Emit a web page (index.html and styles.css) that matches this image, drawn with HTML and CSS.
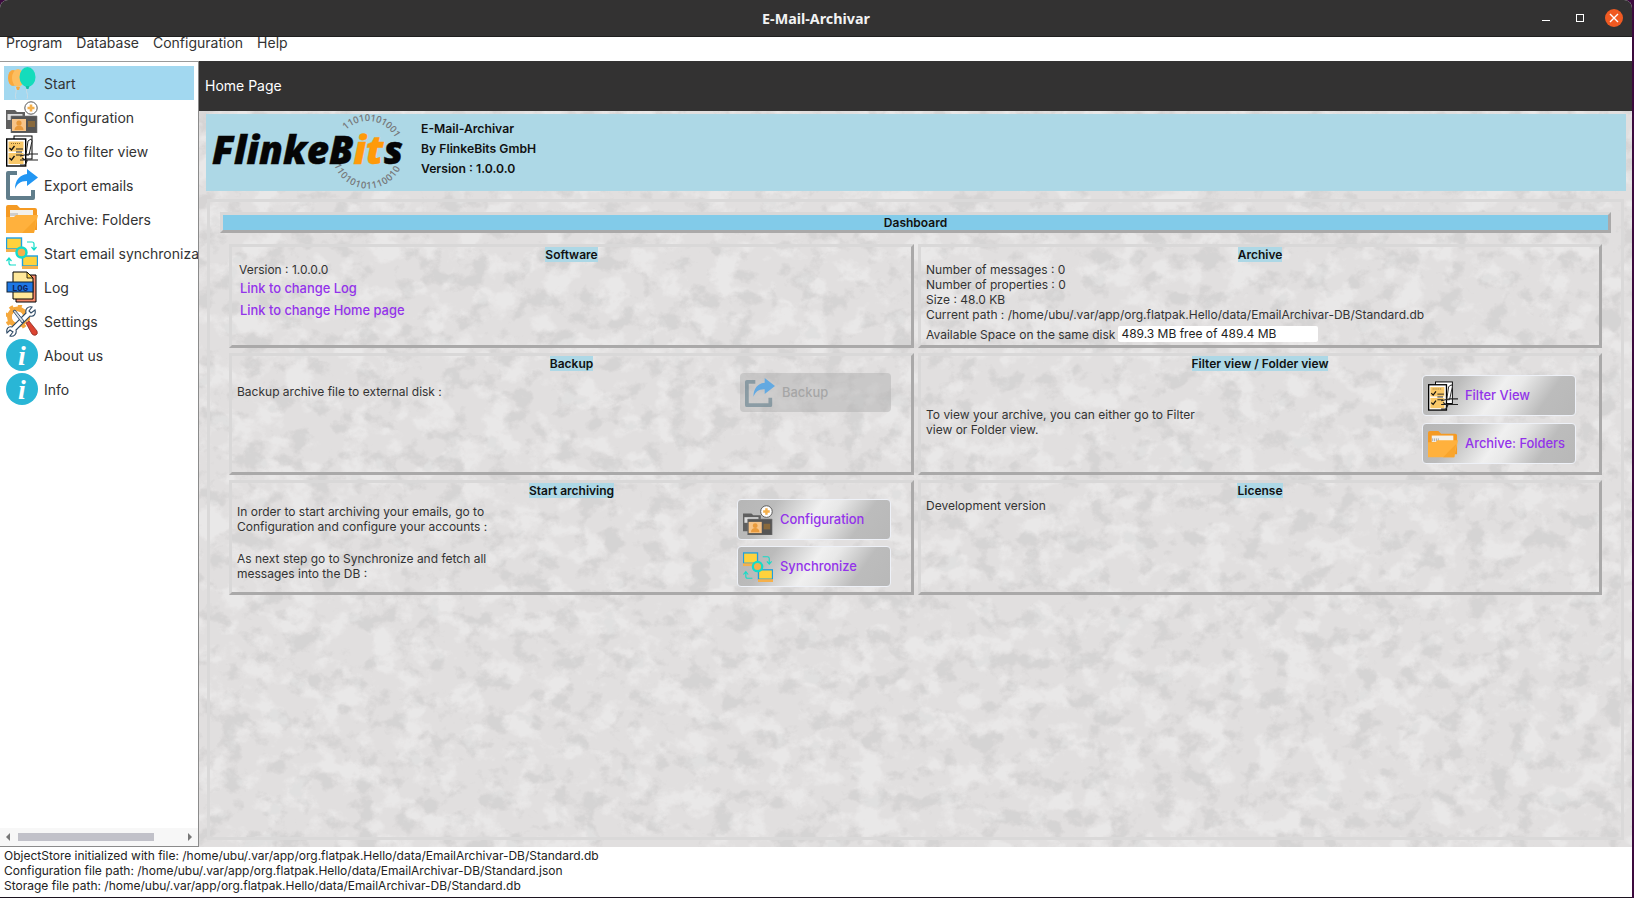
FILE: index.html
```html
<!DOCTYPE html>
<html lang="en">
  <head>
    <meta charset="UTF-8" />
    <title>E-Mail-Archivar</title>
    <link rel="stylesheet" href="styles.css">
  </head>

  <body>
    <svg class="none" width="0" height="0">
      <defs>
        <symbol id="i-start" viewBox="0 0 32 32">
          <path d="M9 20 C12 25 8 27 10 32 M21 20 C19 25 23 27 21 32" fill="none" stroke="#d8dde0" stroke-width=".7"/>
          <ellipse cx="7" cy="11" rx="5" ry="8" fill="#f9a83c"/>
          <ellipse cx="12" cy="11" rx="6" ry="9" fill="#fdbe5f"/>
          <path d="M10 20 h4 l-1 3 h-2z" fill="#f9a83c"/>
          <ellipse cx="21.500" cy="10" rx="8" ry="10" fill="#14dcbc"/>
          <path d="M19.500 19 h4 l-1 3 h-2z" fill="#10c0a4"/>
        </symbol>
        <symbol id="i-config" viewBox="0 0 32 32">
          <path d="M0 9 h9 l2 2 h8 v17 h-19z" fill="#5f5f5f"/>
          <rect x="1.500" y="13" width="15" height="6" fill="#ddd"/>
          <path d="M5 15 h26 v17 h-26z" fill="#555" stroke="#777" stroke-width=".6"/>
          <rect x="6" y="18" width="14" height="12" fill="#f7c488"/>
          <circle cx="13" cy="22" r="2.600" fill="#e99a3c"/>
          <path d="M8.500 29 c0-6 9-6 9 0z" fill="#e99a3c"/>
          <rect x="22" y="20" width="7" height="6" fill="#8a6a3c"/>
          <circle cx="25" cy="7" r="6.200" fill="#fff" stroke="#555" stroke-width="1"/>
          <path d="M23.700 3.500 h2.600 v2.200 h2.200 v2.600 h-2.200 v2.200 h-2.600 v-2.200 h-2.200 v-2.600 h2.200z" fill="#f5b04c"/>
        </symbol>
        <symbol id="i-filter" viewBox="0 0 32 32">
          <rect x="8" y="1" width="18" height="23" fill="#fff" stroke="#000" stroke-width="1"/>
          <rect x=".7" y="4" width="19" height="27" fill="#fff" stroke="#000" stroke-width="1.400"/>
          <rect x="2.500" y="6.500" width="15" height="10" fill="#f9c868"/>
          <rect x="2.500" y="18" width="15" height="11" fill="#f9c868"/>
          <path d="M5 8.500 h10" stroke="#8a6a30" stroke-width="1" stroke-dasharray="1 1"/>
          <path d="M3.500 13 l2 2 l3-4 M3.500 23 l2 2 l3-4" fill="none" stroke="#111" stroke-width="1.300"/>
          <path d="M10 14 h7 M10 17 h6 M10 20 h6" stroke="#222" stroke-width="1"/>
          <path d="M22 6 l3-2 l1 2 l-3 14 h-3z" fill="#fff" stroke="#222" stroke-width="1"/>
          <path d="M14 21 l9-2 h9 M14 25 h18 M16 23 l5 3 l-2 4 h-5" fill="none" stroke="#222" stroke-width="1.200"/>
        </symbol>
        <symbol id="i-export" viewBox="0 0 32 32">
          <path d="M11 4 h-9 v25 h25 v-8" fill="none" stroke="#607d8b" stroke-width="4" stroke-linejoin="round"/>
          <path d="M21 0 l11 8.500 l-11 8.500 v-5 c-7 0-10 3-12 8 c0-9 5-14 12-15z" fill="#2196f3"/>
        </symbol>
        <symbol id="i-folder" viewBox="0 0 32 28">
          <path d="M0 2 q0-2 2-2 h9 l3 3 h15 q2 0 2 2 v20 h-31z" fill="#f59a23"/>
          <rect x="4" y="5" width="23" height="7" fill="#f3f0ea"/>
          <path d="M5 8 v3 M7 8 v3 M9 8 v3 M11 8 v3" stroke="#aaa" stroke-width="1"/>
          <path d="M0 28 v-16 h8 l2-2 h22 l-4 18z" fill="#ffb13d"/>
          <path d="M16 28 l14-14 l-2 14z" fill="#f9a52c"/>
        </symbol>
        <symbol id="i-sync" viewBox="0 0 32 32">
          <rect x=".5" y="1" width="15" height="11" fill="#ffd23c" stroke="#1e9fe0" stroke-width="1.400"/>
          <rect x="0" y="12" width="16" height="3" fill="#f5b04c"/>
          <rect x="16.500" y="19" width="15" height="10" fill="#ffd23c" stroke="#1e9fe0" stroke-width="1.400"/>
          <rect x="16" y="29" width="16" height="3" fill="#f5b04c"/>
          <circle cx="15.500" cy="15.500" r="5" fill="#f5b04c" stroke="#14dcc8" stroke-width="2.400"/>
          <path d="M21 5 h5 q2 0 2 2 v5 m-2.500-2 l2.500 3 l2.500-3 M10 28 h-5 q-2 0-2-2 v-4 m-2.500 2 l2.500-3 l2.500 3" fill="none" stroke="#14dcc8" stroke-width="1.200"/>
        </symbol>
        <symbol id="i-log" viewBox="0 0 32 32">
          <path d="M10 4 h20 v27 h-20z" fill="#f58a6c" stroke="#000" stroke-width="1"/>
          <path d="M7 1 h14 l6 6 v21 h-20z" fill="#ffe89a" stroke="#000" stroke-width="1"/>
          <path d="M21 1 v6 h6z" fill="#ffd452" stroke="#000" stroke-width=".8"/>
          <rect x="1" y="11" width="26" height="10" fill="#1e78e6" stroke="#123" stroke-width="1"/>
          <text class="icon-log" x="14" y="19.500" text-anchor="middle">LOG</text>
        </symbol>
        <symbol id="i-settings" viewBox="0 0 32 32">
          <circle cx="11.500" cy="12" r="8" fill="none" stroke="#f5a83c" stroke-width="5"/>
          <circle cx="11.500" cy="12" r="11.200" fill="none" stroke="#f5a83c" stroke-width="3" stroke-dasharray="4 4.800"/>
          <circle cx="11.500" cy="12" r="5.500" fill="#fff"/>
          <path d="M29 5 l-4 3 l-2-2 l3-4 c-4-1-7 2-6 6 l-14 14 c-4-1-6 2-5 6 l3-3 l3 2 l-3 4 c4 1 7-2 6-6 l14-14 c4 1 6-2 5-6z" fill="#fff" stroke="#2e4a66" stroke-width="1.100"/>
          <path d="M7 6 l2-1 l9 11 l-2 2z" fill="#d8dde3" stroke="#2e4a66" stroke-width=".9"/>
          <path d="M20 18 l3-2 l8 10 q1 3-1 4 q-2 1-4-1z" fill="#dc4432" stroke="#8e2a20" stroke-width=".8"/>
        </symbol>
        <symbol id="i-info" viewBox="0 0 32 32">
          <circle cx="16" cy="16" r="16" fill="#29b6d6"/>
          <text class="icon-info" x="16" y="26" text-anchor="middle">i</text>
        </symbol>
      </defs>
    </svg>

    <div class="window">
      <header class="titlebar">
        <span class="titlebar-name">E-Mail-Archivar</span>
        <div class="titlebar-buttons">
          <span class="btn-min"></span>
          <span class="btn-max"></span>
          <span class="btn-close">
            <svg width="10" height="10" viewBox="0 0 10 10"><path d="M1 1 L9 9 M9 1 L1 9" stroke="#fff" stroke-width="1.400"/></svg>
          </span>
        </div>
      </header>

      <nav class="menubar">
        <span>Program</span>
        <span>Database</span>
        <span>Configuration</span>
        <span>Help</span>
      </nav>

      <div class="body-row">
        <aside class="sidebar">
          <ul class="side-list">
            <li class="side-item active"><svg class="side-icon"><use href="#i-start"/></svg><span>Start</span></li>
            <li class="side-item"><svg class="side-icon"><use href="#i-config"/></svg><span>Configuration</span></li>
            <li class="side-item"><svg class="side-icon"><use href="#i-filter"/></svg><span>Go to filter view</span></li>
            <li class="side-item"><svg class="side-icon"><use href="#i-export"/></svg><span>Export emails</span></li>
            <li class="side-item"><svg class="side-icon"><use href="#i-folder"/></svg><span>Archive: Folders</span></li>
            <li class="side-item"><svg class="side-icon"><use href="#i-sync"/></svg><span>Start email synchronization</span></li>
            <li class="side-item"><svg class="side-icon"><use href="#i-log"/></svg><span>Log</span></li>
            <li class="side-item"><svg class="side-icon"><use href="#i-settings"/></svg><span>Settings</span></li>
            <li class="side-item"><svg class="side-icon"><use href="#i-info"/></svg><span>About us</span></li>
            <li class="side-item"><svg class="side-icon"><use href="#i-info"/></svg><span>Info</span></li>
          </ul>
          <div class="hscroll">
            <span class="arrow-left"></span>
            <span class="hscroll-track"><span class="hscroll-thumb"></span></span>
            <span class="arrow-right"></span>
          </div>
        </aside>

        <main class="main">
          <div class="page-head">Home Page</div>
          <div class="page-body">
            <svg class="texture" width="100%" height="100%">
              <filter id="blotch-dark" x="0" y="0" width="100%" height="100%" color-interpolation-filters="sRGB">
                <feTurbulence type="fractalNoise" baseFrequency="0.045 0.05" numOctaves="5" seed="11"/>
                <feColorMatrix type="matrix" values="0 0 0 0 0.35  0 0 0 0 0.35  0 0 0 0 0.35  6 0 0 0 -3.1"/>
              </filter>
              <filter id="blotch-light" x="0" y="0" width="100%" height="100%" color-interpolation-filters="sRGB">
                <feTurbulence type="fractalNoise" baseFrequency="0.035 0.04" numOctaves="5" seed="4"/>
                <feColorMatrix type="matrix" values="0 0 0 0 1  0 0 0 0 1  0 0 0 0 1  0 6 0 0 -3"/>
              </filter>
              <rect width="100%" height="100%" fill="#e1dfdf"/>
              <rect width="100%" height="100%" filter="url(#blotch-dark)" opacity=".08"/>
              <rect width="100%" height="100%" filter="url(#blotch-light)" opacity=".28"/>
            </svg>

            <section class="banner">
              <svg class="logo" width="198" height="77" viewBox="0 0 198 77">
                <defs>
                  <path id="arc-top" d="M140 16 A 31 31 0 0 1 190 25"/>
                  <path id="arc-bot" d="M128 51 A 36 36 0 0 0 196 50"/>
                </defs>
                <text class="logo-bin"><textPath href="#arc-top" textLength="58">11010101001</textPath></text>
                <text class="logo-bin"><textPath href="#arc-bot" textLength="84">11010101110010</textPath></text>
                <text class="logo-word" x="6" y="50" textLength="191" lengthAdjust="spacingAndGlyphs">Flinke<tspan class="logo-b">B</tspan><tspan class="logo-it">it</tspan><tspan class="logo-b">s</tspan></text>
              </svg>
              <div class="banner-text">
                <span>E-Mail-Archivar</span>
                <span>By FlinkeBits GmbH</span>
                <span>Version : 1.0.0.0</span>
              </div>
            </section>

            <section class="frame">
              <h2 class="dash-title">Dashboard</h2>
              <div class="dash-grid">
                <article class="panel">
                  <h3 class="panel-title"><span>Software</span></h3>
                  <div class="software">
                    <span>Version : 1.0.0.0</span>
                    <a class="link">Link to change Log</a>
                    <a class="link">Link to change Home page</a>
                  </div>
                </article>

                <article class="panel">
                  <h3 class="panel-title"><span>Archive</span></h3>
                  <div class="archive">
                    <span>Number of messages : 0</span>
                    <span>Number of properties : 0</span>
                    <span>Size : 48.0 KB</span>
                    <span>Current path : /home/ubu/.var/app/org.flatpak.Hello/data/EmailArchivar-DB/Standard.db</span>
                    <div class="disk">
                      <span>Available Space on the same disk</span>
                      <span class="disk-value">489.3 MB free of 489.4 MB</span>
                    </div>
                  </div>
                </article>

                <article class="panel">
                  <h3 class="panel-title"><span>Backup</span></h3>
                  <div class="split backup">
                    <p>Backup archive file to external disk :</p>
                    <div class="btn disabled"><svg class="btn-icon"><use href="#i-export"/></svg>Backup</div>
                  </div>
                </article>

                <article class="panel">
                  <h3 class="panel-title"><span>Filter view / Folder view</span></h3>
                  <div class="split views">
                    <p>To view your archive, you can either go to Filter view or Folder view.</p>
                    <div class="btn-stack">
                      <div class="btn"><svg class="btn-icon"><use href="#i-filter"/></svg>Filter View</div>
                      <div class="btn"><svg class="btn-icon"><use href="#i-folder"/></svg>Archive: Folders</div>
                    </div>
                  </div>
                </article>

                <article class="panel">
                  <h3 class="panel-title"><span>Start archiving</span></h3>
                  <div class="split starting">
                    <div class="steps">
                      <p>In order to start archiving your emails, go to Configuration and configure your accounts :</p>
                      <p>As next step go to Synchronize and fetch all messages into the DB :</p>
                    </div>
                    <div class="btn-stack">
                      <div class="btn"><svg class="btn-icon"><use href="#i-config"/></svg>Configuration</div>
                      <div class="btn"><svg class="btn-icon"><use href="#i-sync"/></svg>Synchronize</div>
                    </div>
                  </div>
                </article>

                <article class="panel">
                  <h3 class="panel-title"><span>License</span></h3>
                  <div class="license">Development version</div>
                </article>
              </div>
            </section>
          </div>
        </main>
      </div>

      <footer class="status">
        <span>ObjectStore initialized with file: /home/ubu/.var/app/org.flatpak.Hello/data/EmailArchivar-DB/Standard.db</span>
        <span>Configuration file path: /home/ubu/.var/app/org.flatpak.Hello/data/EmailArchivar-DB/Standard.json</span>
        <span>Storage file path: /home/ubu/.var/app/org.flatpak.Hello/data/EmailArchivar-DB/Standard.db</span>
      </footer>
    </div>
  </body>
</html>
```

FILE: styles.css
```css
* {
  margin: 0;
  padding: 0;
  box-sizing: border-box;
}
:root {
  --dark: #333232;
  --text: #333;
  --link: #9333ea;
  --bevel-light: #d9d8d8;
  --bevel-dark: #aaa9a9;
  --sky: #add8e6;
}
html,
body {
  width: 100%;
  height: 100%;
  overflow: hidden;
}
body {
  background-color: #3c0a3e;
  color: var(--text);
  font-family: Inter, "Noto Sans", sans-serif;
  font-size: 12px;
}
.none {
  position: absolute;
}
.window {
  display: flex;
  flex-direction: column;
  width: 1632px;
  height: 898px;
  background-color: #fff;
  border-radius: 8px 8px 0 0;
  border-bottom: 1px solid #1c1420;
  overflow: hidden;
}

/* title bar */
.titlebar {
  display: flex;
  align-items: center;
  justify-content: center;
  position: relative;
  flex: 0 0 37px;
  background-color: var(--dark);
  border-bottom: 1px solid #1f1f1f;
}
.titlebar-name {
  color: #f2f2f2;
  font-family: "Noto Sans", sans-serif;
  font-size: 14.3px;
  font-weight: 700;
}
.titlebar-buttons {
  position: absolute;
  right: 9px;
  top: 9px;
  display: flex;
  align-items: center;
  gap: 21px;
}
.btn-min {
  width: 8px;
  height: 1px;
  margin: 4px 5px 0 0;
  border-top: 1px solid #fff;
}
.btn-max {
  width: 8px;
  height: 8px;
  border: 1px solid #fff;
}
.btn-close {
  display: flex;
  align-items: center;
  justify-content: center;
  width: 18px;
  height: 18px;
  border-radius: 50%;
  background-color: #f05a22;
}

/* menu */
.menubar {
  display: flex;
  flex: 0 0 24px;
  gap: 14px;
  padding-left: 6px;
  font-size: 14px;
  line-height: 11px;
  color: #333;
  background-color: #fff;
}

.body-row {
  display: flex;
  flex: 1;
  min-height: 0;
}

/* left list */
.sidebar {
  display: flex;
  flex-direction: column;
  flex: 0 0 199px;
  width: 199px;
  border-top: 1px solid #999;
  border-right: 1px solid #8b8b8b;
  border-bottom: 1px solid #8b8b8b;
  overflow: hidden;
}
.side-list {
  flex: 1;
  list-style: none;
  padding: 4px 4px 0;
}
.side-item {
  display: flex;
  align-items: center;
  gap: 6px;
  height: 34px;
  padding-left: 2px;
  font-size: 14px;
  white-space: nowrap;
  overflow: hidden;
  margin-right: -4px;
}
.side-item.active {
  background-color: #a2d8f0;
  margin-right: 0;
}
.side-icon {
  flex: 0 0 32px;
  width: 32px;
  height: 32px;
}
.icon-log {
  font-family: "Liberation Mono", monospace;
  font-size: 9px;
  font-weight: 700;
  fill: #10245a;
}
.icon-info {
  font-family: "Liberation Serif", serif;
  font-size: 28px;
  font-style: italic;
  font-weight: 700;
  fill: #fff;
}
.hscroll {
  display: flex;
  align-items: center;
  flex: 0 0 18px;
  padding: 0 6px;
  background-color: #f7f7f7;
}
.arrow-left,
.arrow-right {
  width: 0;
  height: 0;
  border-top: 4px solid transparent;
  border-bottom: 4px solid transparent;
}
.arrow-left {
  border-right: 4px solid #777;
}
.arrow-right {
  border-left: 4px solid #777;
}
.hscroll-track {
  flex: 1;
  padding: 0 34px 0 8px;
}
.hscroll-thumb {
  display: block;
  height: 8px;
  background-color: #c1c1c9;
}

/* main area */
.main {
  display: flex;
  flex-direction: column;
  flex: 1;
  min-width: 0;
}
.page-head {
  flex: 0 0 50px;
  display: flex;
  align-items: center;
  padding: 0 0 2px 6px;
  background-color: var(--dark);
  color: #fff;
  font-size: 14px;
}
.page-body {
  position: relative;
  display: flex;
  flex-direction: column;
  flex: 1;
  min-height: 0;
  padding: 3px 6px 7px 7px;
}
.texture {
  position: absolute;
  left: 0;
  top: 0;
}
.banner {
  position: relative;
  display: flex;
  align-items: flex-start;
  flex: 0 0 77px;
  gap: 17px;
  background-color: var(--sky);
}
.logo {
  flex: 0 0 198px;
}
.logo-word {
  font-family: "Open Sans", sans-serif;
  font-size: 38px;
  font-style: italic;
  font-weight: 800;
  fill: #050505;
  stroke: #050505;
  stroke-width: 0.4px;
}
.logo-it {
  fill: #ff9a0a;
  stroke: #ff9a0a;
}
.logo-b {
  fill: #050505;
}
.logo-bin {
  font-family: "Open Sans", sans-serif;
  font-size: 9.5px;
  font-weight: 600;
  fill: #77797b;
}
.banner-text {
  display: flex;
  flex-direction: column;
  gap: 5px;
  padding-top: 7px;
  font-size: 12.2px;
  font-weight: 600;
  line-height: 15px;
  color: #111;
}

/* dashboard */
.frame {
  position: relative;
  flex: 1;
  margin: 8px 2px 0 1px;
  padding: 10px 10px;
  border: 3px solid #dad9d9;
}
.dash-title {
  height: 21px;
  border: 3px solid var(--bevel-light);
  border-right-color: var(--bevel-dark);
  border-bottom-color: var(--bevel-dark);
  background-color: #82cbe9;
  color: #111;
  font-size: 12px;
  font-weight: 600;
  line-height: 15px;
  text-align: center;
}
.dash-grid {
  display: grid;
  grid-template-columns: 685px 684px;
  grid-template-rows: 104px 122px 115px;
  column-gap: 4px;
  row-gap: 5px;
  margin: 11px 9px 0;
}
.panel {
  display: flex;
  flex-direction: column;
  border: 3px solid var(--bevel-light);
  border-right-color: var(--bevel-dark);
  border-bottom-color: var(--bevel-dark);
  line-height: 15px;
}
.panel-title {
  font-size: 12px;
  font-weight: 600;
  line-height: 15px;
  text-align: center;
  color: #111;
}
.panel-title span {
  background-color: var(--sky);
}
.software {
  display: flex;
  flex-direction: column;
  padding-left: 7px;
}
.link {
  margin-top: 3px;
  padding-left: 1px;
  font-size: 12.9px;
  font-weight: 500;
  line-height: 18px;
  color: var(--link);
}
.link + .link {
  margin-top: 4px;
}
.archive {
  display: flex;
  flex-direction: column;
  padding-left: 5px;
}
.disk {
  display: flex;
  align-items: center;
  gap: 3px;
  margin-top: 4px;
}
.disk-value {
  width: 200px;
  height: 16px;
  padding-left: 3px;
  background-color: #fff;
  border-radius: 2px;
  color: #222;
}
.split {
  display: flex;
  justify-content: space-between;
  padding-right: 20px;
}
.split p {
  width: 260px;
}
.backup {
  padding-left: 5px;
}
.backup p {
  padding-top: 13px;
}
.backup .btn {
  margin-top: 2px;
}
.views {
  padding-left: 5px;
  padding-right: 23px;
}
.views p {
  width: 280px;
  padding-top: 36px;
}
.starting {
  padding-left: 5px;
}
.steps {
  display: flex;
  flex-direction: column;
  gap: 17px;
  padding-top: 6px;
}
.btn-stack {
  display: flex;
  flex-direction: column;
  gap: 7px;
  margin-top: 4px;
}
.starting .btn-stack {
  gap: 6px;
  margin-top: 1px;
}
.btn {
  display: flex;
  align-items: center;
  gap: 7px;
  width: 154px;
  height: 41px;
  padding-left: 5px;
  border: 1px solid #eef1f8;
  border-radius: 4px;
  background: linear-gradient(125deg, #b6b6b6 0%, #bbb 22%, #f0f0f0 48%, #e8e8e8 58%, #bcbcbc 78%, #b8b8b8 100%);
  font-size: 12.9px;
  font-weight: 500;
  color: var(--link);
}
.btn-icon {
  flex: 0 0 30px;
  width: 30px;
  height: 30px;
}
.btn.disabled {
  width: 151px;
  height: 39px;
  border: 0;
  background: rgba(165, 165, 165, 0.4);
  color: #a6a6a6;
}
.btn.disabled .btn-icon {
  opacity: 0.6;
}
.license {
  padding-left: 5px;
}

/* log lines */
.status {
  display: flex;
  flex-direction: column;
  flex: 0 0 50px;
  padding: 1px 0 0 4px;
  font-size: 12px;
  line-height: 15px;
  color: #222;
  background-color: #fff;
}
```
